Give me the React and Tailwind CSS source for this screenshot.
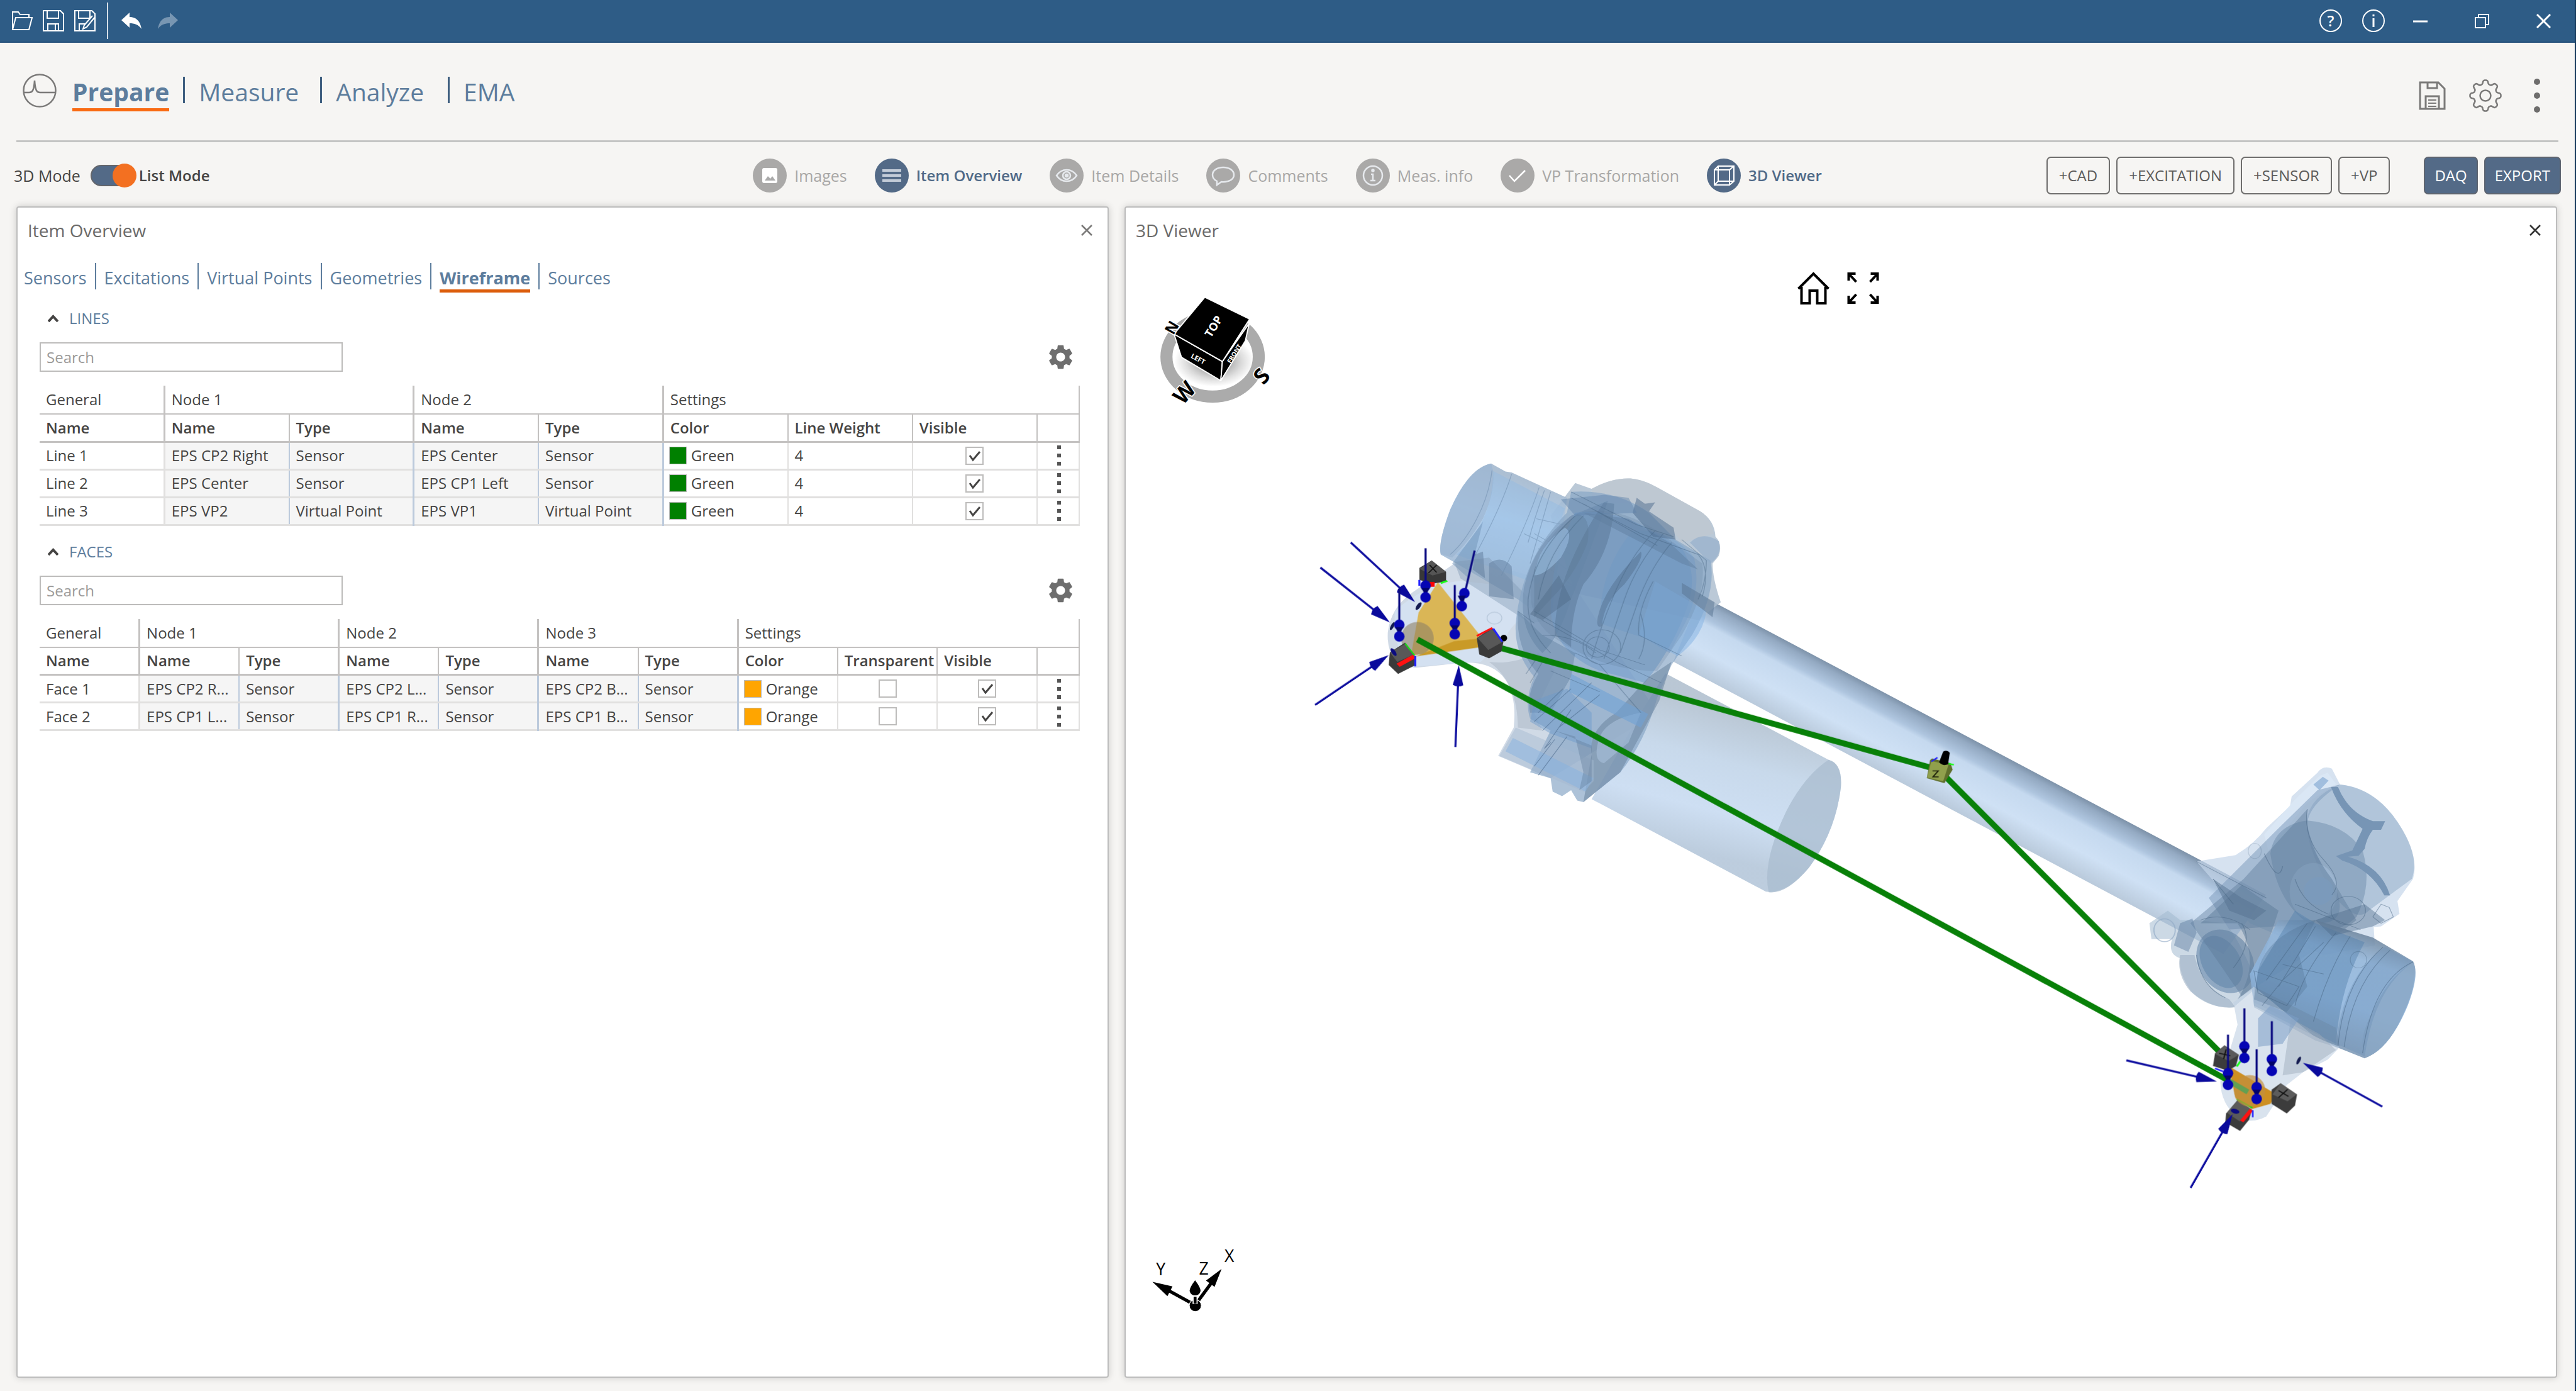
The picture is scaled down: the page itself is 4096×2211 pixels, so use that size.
import React, { useState } from "react";
import { MdSettings } from "react-icons/md";

const views = [
  { name: "Images", icon: "image", active: false },
  { name: "Item Overview", icon: "list", active: true },
  { name: "Item Details", icon: "eye", active: false },
  { name: "Comments", icon: "comment", active: false },
  { name: "Meas. info", icon: "info", active: false },
  { name: "VP Transformation", icon: "check", active: false },
  { name: "3D Viewer", icon: "cube", active: true },
];

const itemTabs = ["Sensors", "Excitations", "Virtual Points", "Geometries", "Wireframe", "Sources"];

const lines = [
  { name: "Line 1", nodes: ["EPS CP2 Right", "Sensor", "EPS Center", "Sensor"] },
  { name: "Line 2", nodes: ["EPS Center", "Sensor", "EPS CP1 Left", "Sensor"] },
  { name: "Line 3", nodes: ["EPS VP2", "Virtual Point", "EPS VP1", "Virtual Point"] },
];

const faces = [
  { name: "Face 1", nodes: ["EPS CP2 R...", "Sensor", "EPS CP2 L...", "Sensor", "EPS CP2 B...", "Sensor"] },
  { name: "Face 2", nodes: ["EPS CP1 L...", "Sensor", "EPS CP1 R...", "Sensor", "EPS CP1 B...", "Sensor"] },
];

const ViewIcon = ({ name }) => (
  <svg viewBox="0 0 54 54" className="size-full" fill="none" stroke="#e6e9ed" strokeWidth="2.5">
    {name === "image" && (
      <>
        <rect x="15" y="15" width="24" height="24" rx="3" fill="#fff" stroke="none" />
        <path d="M19 35l5-7 4 4 3-4 5 7z" fill="#aaa" stroke="none" />
      </>
    )}
    {name === "list" && <path d="M12 19h30M12 27h30M12 35h30" strokeWidth="4" stroke="#c3ccd8" />}
    {name === "eye" && (
      <>
        <path d="M11 27c8-12 24-12 32 0c-8 12-24 12-32 0z" />
        <circle cx="27" cy="27" r="6" />
        <circle cx="27" cy="27" r="2" fill="#e6e9ed" />
      </>
    )}
    {name === "comment" && <path d="M27 14c-10 0-17 5-17 12c0 5 3 8 7 10v6l7-5c12 1 20-4 20-11c0-7-7-12-17-12z" />}
    {name === "info" && (
      <>
        <circle cx="27" cy="27" r="15" />
        <path d="M24 25h3v10M23 35h8" />
        <circle cx="27" cy="19" r="1.5" fill="#e6e9ed" />
      </>
    )}
    {name === "check" && <path d="M14 27l8 9l17-17" stroke="#fff" />}
    {name === "cube" && (
      <path d="M12 18l6-6h25v24l-7 6H12zM12 18h24v24M36 18l7-6M18 12v24h25M18 36l-6 6" strokeWidth="2" stroke="#fff" />
    )}
  </svg>
);

const gearOutline = () => {
  const pts = [];
  for (let i = 0; i < 160; i++) {
    const t = (i / 160) * Math.PI * 2;
    const r = 21.5 + 3.2 * Math.tanh(1.8 * Math.cos(8 * t));
    pts.push(`${(27 + r * Math.cos(t)).toFixed(1)},${(27 + r * Math.sin(t)).toFixed(1)}`);
  }
  return pts.join(" ");
};

const TitleBar = () => (
  <header className="flex h-[68px] items-center border-b-2 border-[#24507a] bg-[#2e5c86] pl-[18px] pr-[38px] text-white">
    <div className="flex gap-4">
      <button aria-label="Open">
        <svg viewBox="0 0 34 34" className="size-[34px]" fill="none" stroke="#fff" strokeWidth="2">
          <path d="M2 31V3h9l3 4h14v6M2 31l5-19h26l-5 19z" />
        </svg>
      </button>
      <button aria-label="Save">
        <svg viewBox="0 0 34 34" className="size-[34px]" fill="none" stroke="#fff" strokeWidth="2">
          <path d="M1 1h27l5 5v27H1zM7 1v12h18V1M8 33V22h17v11M20 22v11" />
        </svg>
      </button>
      <button aria-label="Save as">
        <svg viewBox="0 0 34 34" className="size-[34px]" fill="none" stroke="#fff" strokeWidth="2">
          <path d="M1 1h27l5 5v27H1zM7 1v12h18V1M8 33V22h9M33 11L20 27l-6 3l2-6l13-15" />
        </svg>
      </button>
    </div>
    <div className="ml-[18px] h-[58px] w-[2px] bg-[#d5dee7]" />
    <button aria-label="Undo" className="ml-[21px]">
      <svg viewBox="0 0 32 26" className="h-[26px] w-8" fill="#fff">
        <path d="M0 12L13 0v7c10 0 17 6 19 19c-5-7-11-9-19-9v7z" />
      </svg>
    </button>
    <button aria-label="Redo" className="ml-[26px]">
      <svg viewBox="0 0 32 26" className="h-[26px] w-8" fill="#7896b2">
        <path d="M32 12L19 0v7C9 7 2 13 0 26c5-7 11-9 19-9v7z" />
      </svg>
    </button>
    <div className="ml-auto flex items-center">
      <button className="size-[36px] rounded-full border-2 border-white text-[24px] font-semibold leading-[32px]">?</button>
      <button aria-label="About" className="ml-8">
        <svg viewBox="0 0 36 36" className="size-[36px]" fill="none" stroke="#fff" strokeWidth="2">
          <circle cx="18" cy="18" r="17" />
          <path d="M18 8v3M18 14v14" strokeWidth="3" />
        </svg>
      </button>
      <button aria-label="Minimize" className="ml-[45px]">
        <svg viewBox="0 0 23 23" className="size-[23px]" stroke="#fff" strokeWidth="3">
          <path d="M0 12h23" />
        </svg>
      </button>
      <button aria-label="Restore" className="ml-[75px]">
        <svg viewBox="0 0 23 23" className="size-[23px]" fill="none" stroke="#fff" strokeWidth="2">
          <path d="M1 6h16v16H1zM6 6V1h16v16h-5" />
        </svg>
      </button>
      <button aria-label="Close window" className="ml-[75px]">
        <svg viewBox="0 0 23 23" className="size-[23px]" stroke="#fff" strokeWidth="3">
          <path d="M1 1l21 21M22 1L1 22" />
        </svg>
      </button>
    </div>
  </header>
);

const MainNav = () => (
  <div className="mr-[26px] ml-[26px] flex h-[158px] items-start border-b-3 border-[#c4c4c3] pt-[49px] pl-[10px] text-[39px] leading-[48px] text-[#5d7d9d]">
    <svg viewBox="0 0 54 54" className="size-[54px]" fill="none" stroke="#7b7a79" strokeWidth="2.5">
      <circle cx="27" cy="27" r="25.5" />
      <path d="M2 30h8c6 0 8-4 9-19c1 15 3 19 9 19h24" />
    </svg>
    <nav className="ml-[25px] flex items-start gap-[22px] pt-[5px]">
      <button className="border-b-5 border-[#f96a12] pb-[2px] font-bold">Prepare</button>
      <span className="h-[42px] w-[3px] bg-[#3f5f80]" />
      <button className="pr-3">Measure</button>
      <span className="h-[42px] w-[3px] bg-[#3f5f80]" />
      <button className="pr-4">Analyze</button>
      <span className="h-[42px] w-[3px] bg-[#3f5f80]" />
      <button>EMA</button>
    </nav>
    <div className="ml-auto flex items-center pt-2 pr-[28px]">
      <button aria-label="Save project">
        <svg viewBox="0 0 43 46" className="h-[46px] w-[43px]" fill="none" stroke="#7b7a79" strokeWidth="3">
          <path d="M2 2h29l10 10v32H2zM14 2v9h15V2M11 44V24h21v20" />
          <path d="M15 30h13M15 35h13M15 40h13" strokeWidth="2" />
        </svg>
      </button>
      <button aria-label="Settings" className="ml-9">
        <svg viewBox="0 0 54 54" className="size-[54px]" fill="none" stroke="#7b7a79" strokeWidth="2.5">
          <polygon points={gearOutline()} />
          <circle cx="27" cy="27" r="8.5" />
        </svg>
      </button>
      <button aria-label="More" className="ml-[49px]">
        <svg viewBox="0 0 12 54" className="h-[54px] w-3" fill="#6e6d6c">
          <circle cx="6" cy="5" r="5" />
          <circle cx="6" cy="27" r="5" />
          <circle cx="6" cy="49" r="5" />
        </svg>
      </button>
    </div>
  </div>
);

const OutlineButton = ({ children }) => (
  <button className="h-[60px] rounded-[7px] border-2 border-[#6f6e6d] px-[18px] text-[#5c5b5a]">{children}</button>
);

const SolidButton = ({ children }) => (
  <button className="h-[60px] rounded-[7px] border-2 border-[#5d6470] bg-[#536a87] px-[15px] text-white">{children}</button>
);

const Toolbar = () => {
  const [listMode, setListMode] = useState(true);
  return (
    <div className="grid h-[102px] grid-cols-[1fr_auto_1fr] items-center pt-[3px] pl-[22px] pr-[22px] text-[25px] leading-[34px] text-[#454443]">
      <label className="flex items-center">
        <span>3D Mode</span>
        <span className="ml-[16px] grid items-center">
          <input
            type="checkbox"
            role="switch"
            checked={listMode}
            onChange={() => setListMode(!listMode)}
            className="col-start-1 row-start-1 h-[34px] w-[70px] appearance-none rounded-full border-2 border-[#62656b] bg-[#536a87]"
          />
          <span className="pointer-events-none col-start-1 row-start-1 ml-[35px] size-[38px] rounded-full bg-[#f37021]" />
        </span>
        <span className="ml-1 text-[24px] font-semibold">List Mode</span>
      </label>
      <div className="flex gap-[44px]">
        {views.map((view) => (
          <button
            key={view.name}
            className={
              view.active
                ? "flex items-center gap-3 text-[24px] font-semibold text-[#506a88]"
                : "flex items-center gap-3 text-[#a8a7a6]"
            }
          >
            <span className={view.active ? "size-[54px] rounded-full bg-[#536a87]" : "size-[54px] rounded-full bg-[#aaa9a8]"}>
              <ViewIcon name={view.icon} />
            </span>
            {view.name}
          </button>
        ))}
      </div>
      <div className="flex justify-end gap-[10px] text-[24px]">
        <OutlineButton>+CAD</OutlineButton>
        <OutlineButton>+EXCITATION</OutlineButton>
        <OutlineButton>+SENSOR</OutlineButton>
        <OutlineButton>+VP</OutlineButton>
        <span className="w-[34px]" />
        <SolidButton>DAQ</SolidButton>
        <SolidButton>EXPORT</SolidButton>
      </div>
    </div>
  );
};

const Panel = ({ title, closeColor, children }) => (
  <section className="flex min-w-0 flex-col rounded-[4px] border-2 border-[#bdbdbd] bg-white shadow-[0_0_12px_rgba(0,0,0,0.18)]">
    <div className="flex items-center justify-between pt-4 pr-6 pl-4">
      <h2 className="text-[28px] leading-[40px] text-[#6b6a69]">{title}</h2>
      <button aria-label={`Close ${title}`}>
        <svg viewBox="0 0 18 18" className="size-[18px]" stroke={closeColor} strokeWidth="2.5">
          <path d="M1 1l16 16M17 1L1 17" />
        </svg>
      </button>
    </div>
    {children}
  </section>
);

const ItemTabs = () => (
  <nav className="mt-8 flex items-start gap-[13px] pl-[10px] text-[27px] leading-[36px] text-[#5d7d9d]">
    {itemTabs.map((tab, i) => (
      <React.Fragment key={tab}>
        {i > 0 && <span className="h-[42px] w-[2px] bg-[#5d7d9d]" />}
        <button className={tab === "Wireframe" ? "border-b-5 border-[#dc5c0a] pt-[6px] font-bold" : "border-b-5 border-transparent pt-[6px]"}>
          {tab}
        </button>
      </React.Fragment>
    ))}
  </nav>
);

const Check = ({ label, on }) => (
  <span className="mx-auto grid size-[29px]">
    <input
      type="checkbox"
      aria-label={label}
      defaultChecked={on}
      className="peer col-start-1 row-start-1 size-[29px] appearance-none border-2 border-[#bdbcbb] bg-white"
    />
    <svg
      viewBox="0 0 29 29"
      className="pointer-events-none invisible col-start-1 row-start-1 size-[29px] peer-checked:visible"
      fill="none"
      stroke="#454443"
      strokeWidth="3"
    >
      <path d="M7 14l5 7l11-13" />
    </svg>
  </span>
);

const RowMenu = ({ label }) => (
  <button aria-label={label} className="block pl-[31px]">
    <svg viewBox="0 0 6 32" className="h-8 w-[6px]" fill="#555">
      <path d="M0 0h6v6H0zM0 13h6v6H0zM0 26h6v6H0z" />
    </svg>
  </button>
);

// header cells of one table: groups on top, plain columns below
const TableHead = ({ groups, columns }) => (
  <thead className="text-left text-[#454443]">
    <tr className="h-[45px] border-b-2 border-[#c4c2c1]">
      {groups.map((g, i) => (
        <th
          key={g.name}
          colSpan={g.span}
          className={i === groups.length - 1 ? "border-r-2 border-[#c4c2c1] px-[10px] font-normal" : "border-r-3 border-[#c4c2c1] px-[10px] font-normal"}
        >
          {g.name}
        </th>
      ))}
    </tr>
    <tr className="h-[44px] border-b-3 border-[#c4c2c1]">
      {columns.map((c, i) => (
        <th
          key={i}
          className={c.edge ? "border-r-3 border-[#c4c2c1] px-[10px] font-semibold" : "border-r-2 border-[#c4c2c1] px-[10px] font-semibold"}
        >
          {c.name}
        </th>
      ))}
    </tr>
  </thead>
);

const NodeCells = ({ nodes }) =>
  nodes.map((text, i) => (
    <td
      key={i}
      className={i % 2 ? "border-r-3 border-r-[#bccadc] bg-[#f5f5f5] px-[10px]" : "border-r-2 border-r-[#bccadc] bg-[#f5f5f5] px-[10px]"}
    >
      {text}
    </td>
  ));

const Section = ({ title, children }) => (
  <div className="mt-[25px] pr-[44px] pl-[35px] text-[24px]">
    <button className="flex items-center gap-[17px] pl-[13px] text-[24px] leading-[32px] text-[#5d7d9d]">
      <svg viewBox="0 0 17 12" className="h-3 w-[17px]" fill="none" stroke="#454443" strokeWidth="4">
        <path d="M1 11l7.500-8l7.500 8" />
      </svg>
      {title}
    </button>
    <div className="mt-[22px] flex items-center justify-between pr-[7px]">
      <input
        type="text"
        placeholder="Search"
        aria-label={`Search ${title}`}
        className="h-[47px] w-[482px] border-2 border-[#bdbcbb] px-[9px] text-[24px] placeholder:text-[#9b9a99]"
      />
      <button aria-label={`${title} settings`}>
        <MdSettings className="size-[47px] text-[#6e6e6e]" />
      </button>
    </div>
    {children}
  </div>
);

const nameType = [{ name: "Name" }, { name: "Type", edge: true }];

const LinesTable = () => (
  <table className="mt-[22px] w-full table-fixed border-collapse whitespace-nowrap text-[24px] leading-[32px] text-[#454443]">
    <colgroup>
      <col span={8} />
      <col className="w-[67px]" />
    </colgroup>
    <TableHead
      groups={[
        { name: "General", span: 1 },
        { name: "Node 1", span: 2 },
        { name: "Node 2", span: 2 },
        { name: "Settings", span: 4 },
      ]}
      columns={[
        { name: "Name", edge: true },
        ...nameType,
        ...nameType,
        { name: "Color" },
        { name: "Line Weight" },
        { name: "Visible" },
        { name: "" },
      ]}
    />
    <tbody>
      {lines.map((line) => (
        <tr key={line.name} className="h-[44px] border-b-3 border-[#e1e0df]">
          <td className="border-r-3 border-[#e1e0df] px-[10px]">{line.name}</td>
          <NodeCells nodes={line.nodes} />
          <td className="border-r-2 border-[#e1e0df] px-2">
            <span className="flex items-center gap-[7px]">
              <span className="size-7 border border-[#b9b9b9] bg-[#008000]" />
              Green
            </span>
          </td>
          <td className="border-r-2 border-[#e1e0df] px-[10px]">4</td>
          <td className="border-r-2 border-[#e1e0df]">
            <Check label={`${line.name} visible`} on />
          </td>
          <td className="border-r-2 border-[#e1e0df]">
            <RowMenu label={`${line.name} menu`} />
          </td>
        </tr>
      ))}
    </tbody>
  </table>
);

const FacesTable = () => (
  <table className="mt-[22px] w-full table-fixed border-collapse whitespace-nowrap text-[24px] leading-[32px] text-[#454443]">
    <colgroup>
      <col span={10} />
      <col className="w-[67px]" />
    </colgroup>
    <TableHead
      groups={[
        { name: "General", span: 1 },
        { name: "Node 1", span: 2 },
        { name: "Node 2", span: 2 },
        { name: "Node 3", span: 2 },
        { name: "Settings", span: 4 },
      ]}
      columns={[
        { name: "Name", edge: true },
        ...nameType,
        ...nameType,
        ...nameType,
        { name: "Color" },
        { name: "Transparent" },
        { name: "Visible" },
        { name: "" },
      ]}
    />
    <tbody>
      {faces.map((face) => (
        <tr key={face.name} className="h-[44px] border-b-3 border-[#e1e0df]">
          <td className="border-r-3 border-[#e1e0df] px-[10px]">{face.name}</td>
          <NodeCells nodes={face.nodes} />
          <td className="border-r-2 border-[#e1e0df] px-2">
            <span className="flex items-center gap-[7px]">
              <span className="size-7 border border-[#b9b9b9] bg-[#ffa500]" />
              Orange
            </span>
          </td>
          <td className="border-r-2 border-[#e1e0df]">
            <Check label={`${face.name} transparent`} />
          </td>
          <td className="border-r-2 border-[#e1e0df]">
            <Check label={`${face.name} visible`} on />
          </td>
          <td className="border-r-2 border-[#e1e0df]">
            <RowMenu label={`${face.name} menu`} />
          </td>
        </tr>
      ))}
    </tbody>
  </table>
);

// excitation direction: thin shaft, cone at the hit point
const Arrow = ({ from, to }) => {
  const [x1, y1] = from;
  const [x2, y2] = to;
  const len = Math.hypot(x2 - x1, y2 - y1);
  const angle = (Math.atan2(y2 - y1, x2 - x1) * 180) / Math.PI;
  return (
    <g transform={`translate(${x1} ${y1}) rotate(${angle})`}>
      <path d={`M0 0H${len - 25}`} stroke="#1010a0" strokeWidth="3.500" />
      <path d={`M${len} 0l-34 -9q-5 9 0 18z`} fill="#0a0a9c" />
    </g>
  );
};

const Pin = ({ x, top, a, b, lean = 0 }) => (
  <g fill="#0505b4">
    <path d={`M${x + lean} ${top}L${x} ${b}`} stroke="#0a0a80" strokeWidth="3.500" />
    <circle cx={x + lean / 5} cy={a} r="9" />
    <path d={`M${x - 7} ${a + 4}h14l-7 14z`} fill="#03036a" />
    <circle cx={x} cy={b} r="9" />
  </g>
);

const arrows = [
  { from: [2307, 928], to: [2417, 1030] },
  { from: [2255, 971], to: [2374, 1065] },
  { from: [2246, 1206], to: [2372, 1121] },
  { from: [2486, 1278], to: [2492, 1138] },
  { from: [3634, 1814], to: [3789, 1850] },
  { from: [4072, 1893], to: [3936, 1818] },
  { from: [3744, 2032], to: [3816, 1906] },
];

const pins = [
  { x: 2435, top: 938, a: 1002, b: 1022 },
  { x: 2390, top: 1007, a: 1069, b: 1089 },
  { x: 2485, top: 1001, a: 1066, b: 1085 },
  { x: 2497, top: 942, a: 1015, b: 1037, lean: 22 },
  { x: 3836, top: 1725, a: 1790, b: 1810 },
  { x: 3808, top: 1770, a: 1836, b: 1856 },
  { x: 3857, top: 1795, a: 1860, b: 1880 },
  { x: 3883, top: 1747, a: 1812, b: 1832 },
];

const LeftHousing = () => (
  <g transform="translate(2200 760) scale(0.7015 0.5102)">
    {/* bracket behind the sensors */}
    <path d="M405 400L300 500Q250 550 243 630Q238 740 310 750L430 732Q500 730 530 790Q558 850 550 950L512 1045L640 1120L900 900L700 480L480 400z" fill="#b0c2d6" opacity="0.6" />
    <path d="M260 560Q330 470 420 458L560 480L590 560Q540 610 530 650L470 730L310 745Q255 720 260 560z" fill="#d6e4f5" opacity="0.7" />
    <path d="M490 730Q545 740 610 700L650 760L600 900L620 960L560 950Q560 800 490 730z" fill="#aab6c4" opacity="0.5" />
    {/* motor */}
    <path d="M920 768L1318 1058Q1352 1070 1348 1150Q1335 1300 1270 1420Q1215 1510 1165 1500L740 1190L860 900z" fill="url(#motor)" opacity="0.95" />
    <path d="M1318 1058Q1352 1070 1348 1150Q1335 1300 1270 1420Q1215 1510 1172 1502Q1155 1400 1215 1230Q1260 1110 1318 1058z" fill="#aabccf" opacity="0.75" />
    {/* rear cap */}
    <path d="M700 130L740 150Q790 112 835 115Q865 118 900 145L1005 225Q1040 255 1042 310Q1060 335 1050 375L1035 400Q1035 450 1055 530L1000 590L700 500L640 240z" fill="#afbfd0" opacity="0.85" />
    <path d="M740 150Q790 112 835 115Q865 118 900 145L1005 225Q1030 245 1038 300L960 330Q920 250 850 200L740 190z" fill="#bfc7d0" opacity="0.7" />
    {/* left sleeve */}
    <path d="M495 65L530 92L545 95L680 180L640 600L560 520L400 392L372 370Q365 330 395 220Q440 80 495 65z" fill="url(#sleeve)" opacity="0.9" />
    <path d="M495 65Q440 80 395 220Q365 330 372 368L400 380Q440 330 475 250Q505 160 500 90z" fill="#9cb6d1" opacity="0.75" />
    <path d="M500 90L675 215L610 470L410 370Q500 260 500 90z" fill="#93bbe2" opacity="0.45" />
    <path d="M475 260L440 450L400 400z" fill="#6f93b8" opacity="0.5" />
    <path d="M405 395L490 380L640 590L590 600L420 450z" fill="#7c95b2" opacity="0.4" />
    <path d="M455 370L475 360L480 450L450 420zM490 400Q520 370 545 410L550 520L490 510z" fill="#5f7b9b" opacity="0.5" />
    <g fill="none" stroke="#6d8cad" strokeWidth="2" opacity="0.5">
      <path d="M497 88Q490 170 460 250T395 370M545 100Q520 210 455 375M612 145Q585 260 520 440M640 160L590 400M625 155Q600 250 585 330" />
      <path d="M605 250L670 270M600 300L690 370M610 350L680 420M640 420L700 480M575 300L620 330" />
    </g>
    {/* gear housing, stacked translucent shells */}
    <path d="M690 160Q800 150 880 230L945 320L1030 390Q1045 500 985 640L935 740L900 850Q870 1000 810 1100L720 1200L705 1195L690 1160L668 1180L645 1165L640 1120L590 1100L640 960L590 920Q575 860 600 780Q550 700 555 600Q570 380 680 230z" fill="#86a5c5" opacity="0.68" />
    <path d="M690 240Q600 330 575 480Q560 620 620 700Q660 650 690 520Q730 380 780 190z" fill="#7592b2" opacity="0.65" />
    <path d="M700 230Q780 215 860 270L960 350Q1000 430 975 540Q940 680 870 800L760 760Q650 700 640 560Q640 380 700 230z" fill="#7aa2cc" opacity="0.65" />
    <path d="M840 290Q930 280 990 380Q1010 500 960 620L930 700L870 650Q800 620 760 600Q760 420 840 290z" fill="#74a1d0" opacity="0.4" />
    <path d="M895 460L1020 560Q1010 650 950 710L855 640z" fill="#81b1e3" opacity="0.5" />
    <path d="M960 465L1040 530L1035 580L960 500z" fill="#55718f" opacity="0.5" />
    <path d="M770 195L795 200Q790 360 720 470Q690 560 690 680L650 640Q650 440 770 195z" fill="#54728f" opacity="0.45" />
    <path d="M705 235Q740 240 730 330Q700 440 640 520L600 580L600 420Q640 300 705 235z" fill="#5b7793" opacity="0.35" />
    <path d="M675 280Q700 300 665 380Q625 440 600 440Q610 340 675 280z" fill="#aad0f5" opacity="0.6" />
    <path d="M660 440L690 520L620 590L590 570z" fill="#48617d" opacity="0.4" />
    <path d="M560 560L620 640L700 700L690 780L640 900L590 900Q580 840 610 770Q555 690 560 560z" fill="#5b7b9b" opacity="0.4" />
    <path d="M860 360Q870 380 820 470Q770 530 765 610Q750 620 755 580Q770 480 860 360z" fill="#4d6a8a" opacity="0.45" />
    <path d="M720 230L960 400L1000 420L930 330L830 250z" fill="#5f7e9f" opacity="0.45" />
    <path d="M850 180L870 200L895 195L880 225L940 280L945 320L890 310L840 230z" fill="#4c6a8b" opacity="0.5" />
    <path d="M665 185L770 170L830 180L850 230L700 240z" fill="#5f83aa" opacity="0.45" />
    <path d="M980 330Q1010 290 1050 325Q1060 370 1030 400z" fill="#8fabc9" opacity="0.6" />
    <path d="M690 240Q800 180 940 330L1010 400Q1020 500 960 640L900 760Q760 760 640 640Q570 560 600 420Q630 310 690 240z" fill="#5f7c9b" opacity="0.22" />
    {/* lower flange */}
    <path d="M935 730L905 860L810 1100L720 1200L740 1040Q730 960 800 900L880 780z" fill="#7089a4" opacity="0.6" />
    <path d="M860 900L830 1000L770 1070Q740 1060 760 980Q780 920 860 900z" fill="#a8c0da" opacity="0.6" />
    <path d="M690 770L878 905L860 950L685 830z" fill="#70a2d6" opacity="0.6" />
    <path d="M555 950L640 1000L745 1060L745 1130L720 1165L515 1045z" fill="#a3b9d1" opacity="0.45" />
    <path d="M548 985L745 1120L725 1165L530 1030z" fill="#86b2df" opacity="0.5" />
    <path d="M600 860L680 820L740 900L740 1020L640 970L590 930z" fill="#6b9acb" opacity="0.45" />
    <path d="M650 960L700 980L720 1100L710 1160L740 1130L740 1010z" fill="#617d9b" opacity="0.4" />
    <path d="M610 900L670 820M600 930L690 820M620 960L740 800M640 1000L625 1020L690 890M650 990L600 1080M680 980L610 1110M660 950L760 840" stroke="#4f6d8e" strokeWidth="2" fill="none" opacity="0.6" />
    <g fill="none" stroke="#44627f" strokeWidth="2" opacity="0.45">
      <path d="M700 240Q600 360 585 520Q580 620 640 700M720 240Q630 360 610 520M895 290Q830 380 790 520Q760 620 740 720M915 300Q850 400 820 520T770 720M935 330Q880 420 850 540T810 700" />
      <path d="M690 160L850 270L940 310M690 180L860 300L1000 370Q1030 420 1010 510M720 200L900 340M960 320L1020 390Q1020 460 1000 520" />
      <path d="M600 560L760 690L870 740M620 590L800 730L910 800M560 560L600 600M700 700L760 740L860 900M620 640Q700 640 750 700M640 760L760 830" />
      <ellipse cx="755" cy="680" rx="28" ry="34" />
      <ellipse cx="765" cy="680" rx="46" ry="58" />
      <ellipse cx="503" cy="583" rx="18" ry="20" opacity="0.5" />
      <path d="M860 570Q880 660 855 720M890 460Q850 560 855 640L960 710M580 770L610 710M590 800L620 730" />
    </g>
  </g>
);

const RightHousing = () => (
  <g transform="translate(3200 1200) scale(0.7015 0.5421)">
    {/* pale casting */}
    <path d="M790 505L885 485Q930 450 960 400L1018 330L1022 300L1085 225Q1098 200 1120 212L1140 262Q1220 270 1280 380Q1335 490 1318 560L1280 630L1285 670L1240 710L1222 712L1225 770L1100 800L920 700z" fill="#c4d5e9" opacity="0.7" />
    <path d="M1030 310L1090 235L1110 225L1130 260L1060 320L965 470L955 420z" fill="#dbe8f6" opacity="0.8" />
    <path d="M1075 262L1098 238L1112 250L1090 280z" fill="#7ba4cf" opacity="0.6" />
    {/* round socket */}
    <path d="M1140 262Q1230 275 1285 390Q1335 490 1315 560L1210 660Q1180 700 1130 620Q1060 480 1058 380Q1065 300 1140 262z" fill="#9db5ce" opacity="0.65" />
    <path d="M1085 280L1140 262Q1060 330 1060 390Q1080 500 1120 560Q1170 700 1090 700L870 720L820 620L990 400z" fill="#7f9dbd" opacity="0.55" />
    <path d="M970 480Q980 390 1060 376Q1150 385 1195 470Q1220 580 1180 680Q1140 730 1090 720Q990 660 970 480z" fill="#5f7f9f" opacity="0.4" />
    <path d="M1118 270H1135Q1160 350 1220 378L1250 378L1240 405L1220 405Q1205 430 1200 465L1185 487L1160 490Q1240 520 1262 612H1248Q1215 530 1145 502L1130 488L1170 470Q1185 430 1195 402Q1140 350 1118 270z" fill="#7795b5" />
    <ellipse cx="1075" cy="600" rx="58" ry="90" fill="#a5c0dc" opacity="0.5" />
    <ellipse cx="1088" cy="598" rx="36" ry="44" fill="#8fb3d9" opacity="0.6" />
    {/* clamp ring */}
    <path d="M675 700L720 660L750 690L790 690L860 700Q900 760 940 900L880 965Q820 970 780 920Q745 860 750 810Q720 800 730 750L680 750z" fill="#a3b9d0" opacity="0.55" />
    <path d="M750 800Q740 860 775 915Q830 975 885 965L870 940Q800 900 785 800z" fill="#9fb1c4" opacity="0.6" />
    <ellipse cx="860" cy="820" rx="68" ry="102" fill="#6587aa" opacity="0.6" transform="rotate(-14 860 820)" />
    <ellipse cx="850" cy="822" rx="48" ry="85" fill="#5a7fa6" opacity="0.5" transform="rotate(-18 850 822)" />
    <path d="M1060 340L905 560L775 700Q800 740 900 930L960 880L1110 760L1180 690L1120 560Q1050 440 1060 340z" fill="#5d7a99" opacity="0.42" />
    <path d="M800 700L900 580L990 660L960 780L930 900L890 940Q950 820 890 700z" fill="#5e7b9a" opacity="0.5" />
    <path d="M830 560L900 620L960 660L930 690L870 660z" fill="#56728f" opacity="0.5" />
    <path d="M750 700L780 685L790 730L770 790L735 770z" fill="#5d7d9f" opacity="0.45" />
    <ellipse cx="712" cy="722" rx="26" ry="36" fill="none" stroke="#8fa9c4" strokeWidth="3" opacity="0.6" />
    {/* threaded stub */}
    <path d="M1080 690L1220 745L1318 820Q1335 860 1305 960Q1260 1100 1200 1126L1130 1090L930 960L920 860L990 690z" fill="url(#stub)" opacity="0.88" />
    <path d="M1080 700L1200 760Q1140 900 1130 1080L930 950L940 850L1030 660z" fill="#5580ac" opacity="0.45" />
    <path d="M1320 825Q1330 880 1300 970Q1260 1095 1205 1122Q1180 1080 1215 990Q1260 860 1320 825z" fill="#88a5c3" opacity="0.75" />
    <path d="M1250 775L1320 822Q1225 900 1200 1120L1130 1080Q1150 860 1250 775z" fill="#668db5" opacity="0.35" />
    <path d="M930 900L1130 1030L1140 1095L1080 1070L930 965z" fill="#6c89a8" opacity="0.5" />
    <path d="M1080 1060L1140 1090L1110 1130L1050 1170L1010 1210L960 1310Q930 1330 900 1320Q850 1280 848 1200L890 1020L880 950L930 900z" fill="#c0d0e3" opacity="0.6" />
    <path d="M1020 1000L1090 1050L1130 1100L1050 1170L1000 1180z" fill="#9ba9b8" opacity="0.45" />
    <path d="M940 1000L970 960L1040 1000L1000 1080L940 1090z" fill="#7c9fc6" opacity="0.55" />
    <path d="M1080 690L1200 640L1250 690L1220 710L1120 740z" fill="#4f6d8c" opacity="0.45" />
    <path d="M940 850Q960 740 1080 690L1040 800L1060 900L1010 980L930 940z" fill="#4d6d8f" opacity="0.3" />
    <g fill="none" stroke="#45627f" strokeWidth="2" opacity="0.45">
      <path d="M1060 340Q1050 430 1100 500T1120 610M955 480Q990 580 1000 520M1030 560Q1050 640 1110 670" />
      <path d="M1245 775Q1150 880 1135 1085M1262 785Q1170 890 1150 1090M1318 822Q1220 880 1195 1110M1165 740Q1110 850 1075 1010M1130 730Q1050 850 1030 960" />
      <path d="M1060 700L960 880M1080 710L990 900M1100 760L1000 880L950 960M930 850L1040 900L1010 960L940 920zM1000 830L1100 860M1030 640L1190 720M880 840Q930 760 900 700" />
      <path d="M1240 640L1260 650L1270 680L1240 700L1220 680zM800 690Q860 660 920 720M790 800Q800 900 860 935M830 560L880 640M790 505L960 620" />
      <ellipse cx="1185" cy="815" rx="20" ry="26" opacity="0.7" />
      <ellipse cx="1160" cy="660" rx="42" ry="45" />
      <ellipse cx="932" cy="472" rx="16" ry="24" opacity="0.4" />
    </g>
  </g>
);

const Markers = () => (
  <>
    <g transform="translate(2200 760) scale(0.7015 0.5102)">
      <path d="M350 390L385 428V460L350 468L320 455V415z" fill="#383838" />
      <path d="M350 390L385 428L352 440L320 418z" fill="#555" />
      <path d="M345 405L362 430M362 405L342 432" stroke="#111" strokeWidth="3" />
      <path d="M372 466L388 458" stroke="#19ff19" strokeWidth="6" />
      <path d="M345 470H357" stroke="#f00" strokeWidth="16" />
      <path d="M320 455V475" stroke="#22f" strokeWidth="5" />
      <ellipse cx="526" cy="650" rx="8" ry="11" fill="#000" />
      <path d="M497 615L525 662L520 695L490 718L466 705L460 650z" fill="#3a3a3a" />
      <path d="M497 620L524 662L488 690L462 650z" fill="#585858" />
      <path d="M460 643L498 616" stroke="#f11" strokeWidth="6" />
      <path d="M500 618L522 662" stroke="#22f" strokeWidth="5" />
      <path d="M285 665L308 708L308 742L268 770L245 740L248 698z" fill="#3a3a3a" />
      <path d="M285 670L305 706L266 730L248 698z" fill="#585858" />
      <path d="M268 741L308 711" stroke="#f11" strokeWidth="13" />
      <path d="M310 710V745" stroke="#22f" strokeWidth="5" />
      <path d="M285 668L308 708" stroke="#19d819" strokeWidth="4" />
      <ellipse cx="318" cy="543" rx="5" ry="14" fill="#131a50" transform="rotate(25 318 543)" />
      <ellipse cx="254" cy="610" rx="4" ry="14" fill="#131a50" transform="rotate(20 254 610)" />
      <ellipse cx="257" cy="697" rx="5" ry="14" fill="#0b0b80" transform="rotate(-25 257 697)" />
    </g>
    <g transform="translate(3200 1200) scale(0.7015 0.5421)">
      <path d="M868 1150L985 1240L970 1270L925 1286L885 1252z" fill="#cd8f22" />
      <path d="M858 1085L893 1115L886 1150L866 1165L830 1150L835 1110z" fill="#3c3c3c" />
      <path d="M858 1085L893 1115L868 1135L835 1112z" fill="#5a5a5a" />
      <path d="M845 1110L872 1118M862 1098L856 1128" stroke="#111" strokeWidth="3" />
      <path d="M888 1152L897 1135" stroke="#19ff19" strokeWidth="5" />
      <path d="M835 1158L855 1168" stroke="#22f" strokeWidth="5" />
      <path d="M995 1205L1035 1240L1030 1275L1010 1300L973 1270V1225z" fill="#3c3c3c" />
      <path d="M995 1205L1034 1240L1012 1262L975 1240z" fill="#5c5c5c" />
      <path d="M990 1228L1014 1246M1012 1224L990 1250" stroke="#111" strokeWidth="3" />
      <path d="M890 1258L925 1288L918 1320L896 1355L860 1328L862 1300z" fill="#3c3c3c" />
      <path d="M890 1258L925 1288L895 1325L864 1298z" fill="#5a5a5a" />
      <path d="M900 1325L924 1288" stroke="#f11" strokeWidth="10" />
      <path d="M888 1255L926 1282" stroke="#19d819" strokeWidth="5" />
      <path d="M927 1290V1312" stroke="#22f" strokeWidth="4" />
      <ellipse cx="884" cy="1293" rx="11" ry="7" fill="#0b0b80" transform="rotate(25 884 1293)" />
      <ellipse cx="1039" cy="1133" rx="4" ry="13" fill="#131a50" transform="rotate(20 1039 1133)" />
      {/* centre sensor */}
      <path d="M145 180L190 195L195 215L175 258L132 242L140 185z" fill="#5f6f2c" />
      <path d="M143 188L185 200L172 252L133 240z" fill="#90a04c" />
      <path d="M143 190L158 177" stroke="#22f" strokeWidth="4" />
      <path d="M185 196L198 200" stroke="#19ff19" strokeWidth="5" />
      <path d="M162 192L172 158Q182 152 188 162L184 198Q172 206 162 192z" fill="#000" />
      <path d="M146 219H160L147 238H161" fill="none" stroke="#1a1d08" strokeWidth="3" />
    </g>
  </>
);

const Compass = () => (
  <g transform="translate(1960 490) scale(0.3333)" fontFamily="'Open Sans', sans-serif" fontWeight="700">
    <ellipse cx="340" cy="385" rx="205" ry="130" fill="url(#cubeShade)" />
    <ellipse cx="332" cy="362" rx="237" ry="204" fill="none" stroke="#ababab" strokeWidth="62" />
    <path d="M205 60H540V200L500 130L480 60z" fill="#fff" />
    <g stroke="#fff" strokeWidth="6" strokeLinejoin="round">
      <path d="M134 245L382 386L374 484L172 364z" fill="#000" />
      <path d="M382 386L520 190L500 280L374 484z" fill="#000" />
      <path d="M292 56L522 168L382 386L134 245z" fill="#000" />
    </g>
    <g fill="#fff">
      <text x="335" y="205" fontSize="58" textAnchor="middle" dominantBaseline="central" transform="rotate(-58 335 205)">TOP</text>
      <text x="258" y="372" fontSize="34" textAnchor="middle" dominantBaseline="central" transform="rotate(28 258 372)">LEFT</text>
      <text x="442" y="345" fontSize="32" textAnchor="middle" dominantBaseline="central" transform="rotate(-58 442 345)">FRONT</text>
    </g>
    <g stroke="#fff" strokeWidth="10" paintOrder="stroke" textAnchor="middle" dominantBaseline="central">
      <text x="120" y="210" fontSize="78" transform="rotate(-60 120 210)">N</text>
      <text x="184" y="543" fontSize="112" transform="rotate(-48 184 543)">W</text>
      <text x="580" y="458" fontSize="112" transform="rotate(-50 580 458)">S</text>
    </g>
  </g>
);

const AxisTriad = () => (
  <g transform="translate(1900 2100) scale(0.3333)" fontFamily="'Open Sans', sans-serif" fontSize="86">
    <g stroke="#000" strokeWidth="17">
      <path d="M422 398L290 325M422 398L505 285" />
    </g>
    <path d="M203 278L306 302L280 352zM558 212L478 272L522 304z" />
    <circle cx="423" cy="400" r="31" stroke="#fff" strokeWidth="4" />
    <path d="M422 392V355" stroke="#fff" strokeWidth="26" />
    <path d="M422 390V355" stroke="#000" strokeWidth="15" />
    <path d="M422 270Q452 310 450 325Q445 348 422 348Q399 348 394 325Q392 310 422 270z" />
    <text x="598" y="178" textAnchor="middle">X</text>
    <text x="246" y="246" textAnchor="middle">Y</text>
    <text x="467" y="240" textAnchor="middle">Z</text>
  </g>
);

const Scene = () => (
  <svg viewBox="1922 427 2447 1925" className="size-full" role="img" aria-label="3D model">
    <defs>
      <linearGradient id="tube" gradientUnits="userSpaceOnUse" x1="3300" y1="1227" x2="3240" y2="1340">
        <stop offset="0" stopColor="#768ca4" />
        <stop offset="0.080" stopColor="#8ea5bf" />
        <stop offset="0.250" stopColor="#aac2dd" />
        <stop offset="0.320" stopColor="#c2d7ee" />
        <stop offset="0.650" stopColor="#ccdff4" />
        <stop offset="1" stopColor="#b3c4d6" />
      </linearGradient>
      <linearGradient id="motor" gradientUnits="userSpaceOnUse" x1="1120" y1="910" x2="960" y2="1350">
        <stop offset="0" stopColor="#b6c4d2" />
        <stop offset="0.350" stopColor="#c5d7ea" />
        <stop offset="0.700" stopColor="#cbddf2" />
        <stop offset="1" stopColor="#b9cadc" />
      </linearGradient>
      <linearGradient id="sleeve" gradientUnits="userSpaceOnUse" x1="600" y1="130" x2="470" y2="450">
        <stop offset="0" stopColor="#a3b8ce" />
        <stop offset="0.400" stopColor="#adccec" />
        <stop offset="1" stopColor="#a0b8d2" />
      </linearGradient>
      <linearGradient id="stub" gradientUnits="userSpaceOnUse" x1="1220" y1="750" x2="1080" y2="1080">
        <stop offset="0" stopColor="#7189a2" />
        <stop offset="0.200" stopColor="#8fb3d8" />
        <stop offset="0.600" stopColor="#8db4dd" />
        <stop offset="1" stopColor="#7b96b3" />
      </linearGradient>
      <radialGradient id="cubeShade">
        <stop offset="0" stopColor="#777" />
        <stop offset="0.700" stopColor="#ddd" />
        <stop offset="1" stopColor="#fff" />
      </radialGradient>
    </defs>
    <path d="M2905 1018L3873 1531L3800 1632L2859 1132z" fill="url(#tube)" opacity="0.95" />
    <LeftHousing />
    <RightHousing />
    <path d="M2456 996L2540 1102L2410 1122L2423 1048z" fill="#dab34a" opacity="0.93" />
    <path d="M2484 1097L2530 1092L2530 1107L2418 1123z" fill="#c99a27" />
    <circle cx="2421" cy="1092" r="28" fill="#8d8166" opacity="0.6" />
    <g stroke="#088008" strokeWidth="10">
      <path d="M2421 1094L3808 1848M2565 1109L3302 1314M3326 1330L3793 1799" />
    </g>
    <Markers />
    <circle cx="3845" cy="1866" r="27" fill="#c28f3e" opacity="0.7" />
    <path d="M3808 1848L3842 1868" stroke="#63a052" strokeWidth="9" />
    {arrows.map((a, i) => (
      <Arrow key={i} {...a} />
    ))}
    {pins.map((p, i) => (
      <Pin key={i} {...p} />
    ))}
    <Compass />
    <AxisTriad />
  </svg>
);

const Viewer = () => (
  <div className="relative mt-2 min-h-0 flex-1">
    <div className="absolute inset-0">
      <Scene />
    </div>
    <div className="absolute top-[38px] left-1/2 flex -translate-x-1/2 gap-[27px] pr-2">
      <button aria-label="Home view">
        <svg viewBox="0 0 52 52" className="size-[52px]" fill="none" stroke="#000" strokeWidth="4">
          <path d="M2 27L26 3l24 24M7 24v26h13V30h12v20h13V24" />
        </svg>
      </button>
      <button aria-label="Fit to screen">
        <svg viewBox="0 0 52 52" className="size-[52px]" fill="none" stroke="#000" strokeWidth="4">
          <path d="M3 14V3h11M3 3l12 13M38 3h11v11M49 3L37 16M3 38v11h11M3 49l12-13M38 49h11V38M49 49L37 36" />
        </svg>
      </button>
    </div>
  </div>
);

const App = () => {
  return (
    <div className="flex min-h-screen flex-col border-r-2 border-[#173a5c] bg-[#f6f5f3] font-['Open_Sans','Noto_Sans',sans-serif]">
      <TitleBar />
      <MainNav />
      <Toolbar />
      <main className="grid flex-1 grid-cols-[1737fr_2278fr] gap-[25px] pr-[28px] pb-[21px] pl-[26px]">
        <Panel title="Item Overview" closeColor="#7b7a79">
          <ItemTabs />
          <Section title="LINES">
            <LinesTable />
          </Section>
          <Section title="FACES">
            <FacesTable />
          </Section>
        </Panel>
        <Panel title="3D Viewer" closeColor="#333">
          <Viewer />
        </Panel>
      </main>
    </div>
  );
};

export default App;
